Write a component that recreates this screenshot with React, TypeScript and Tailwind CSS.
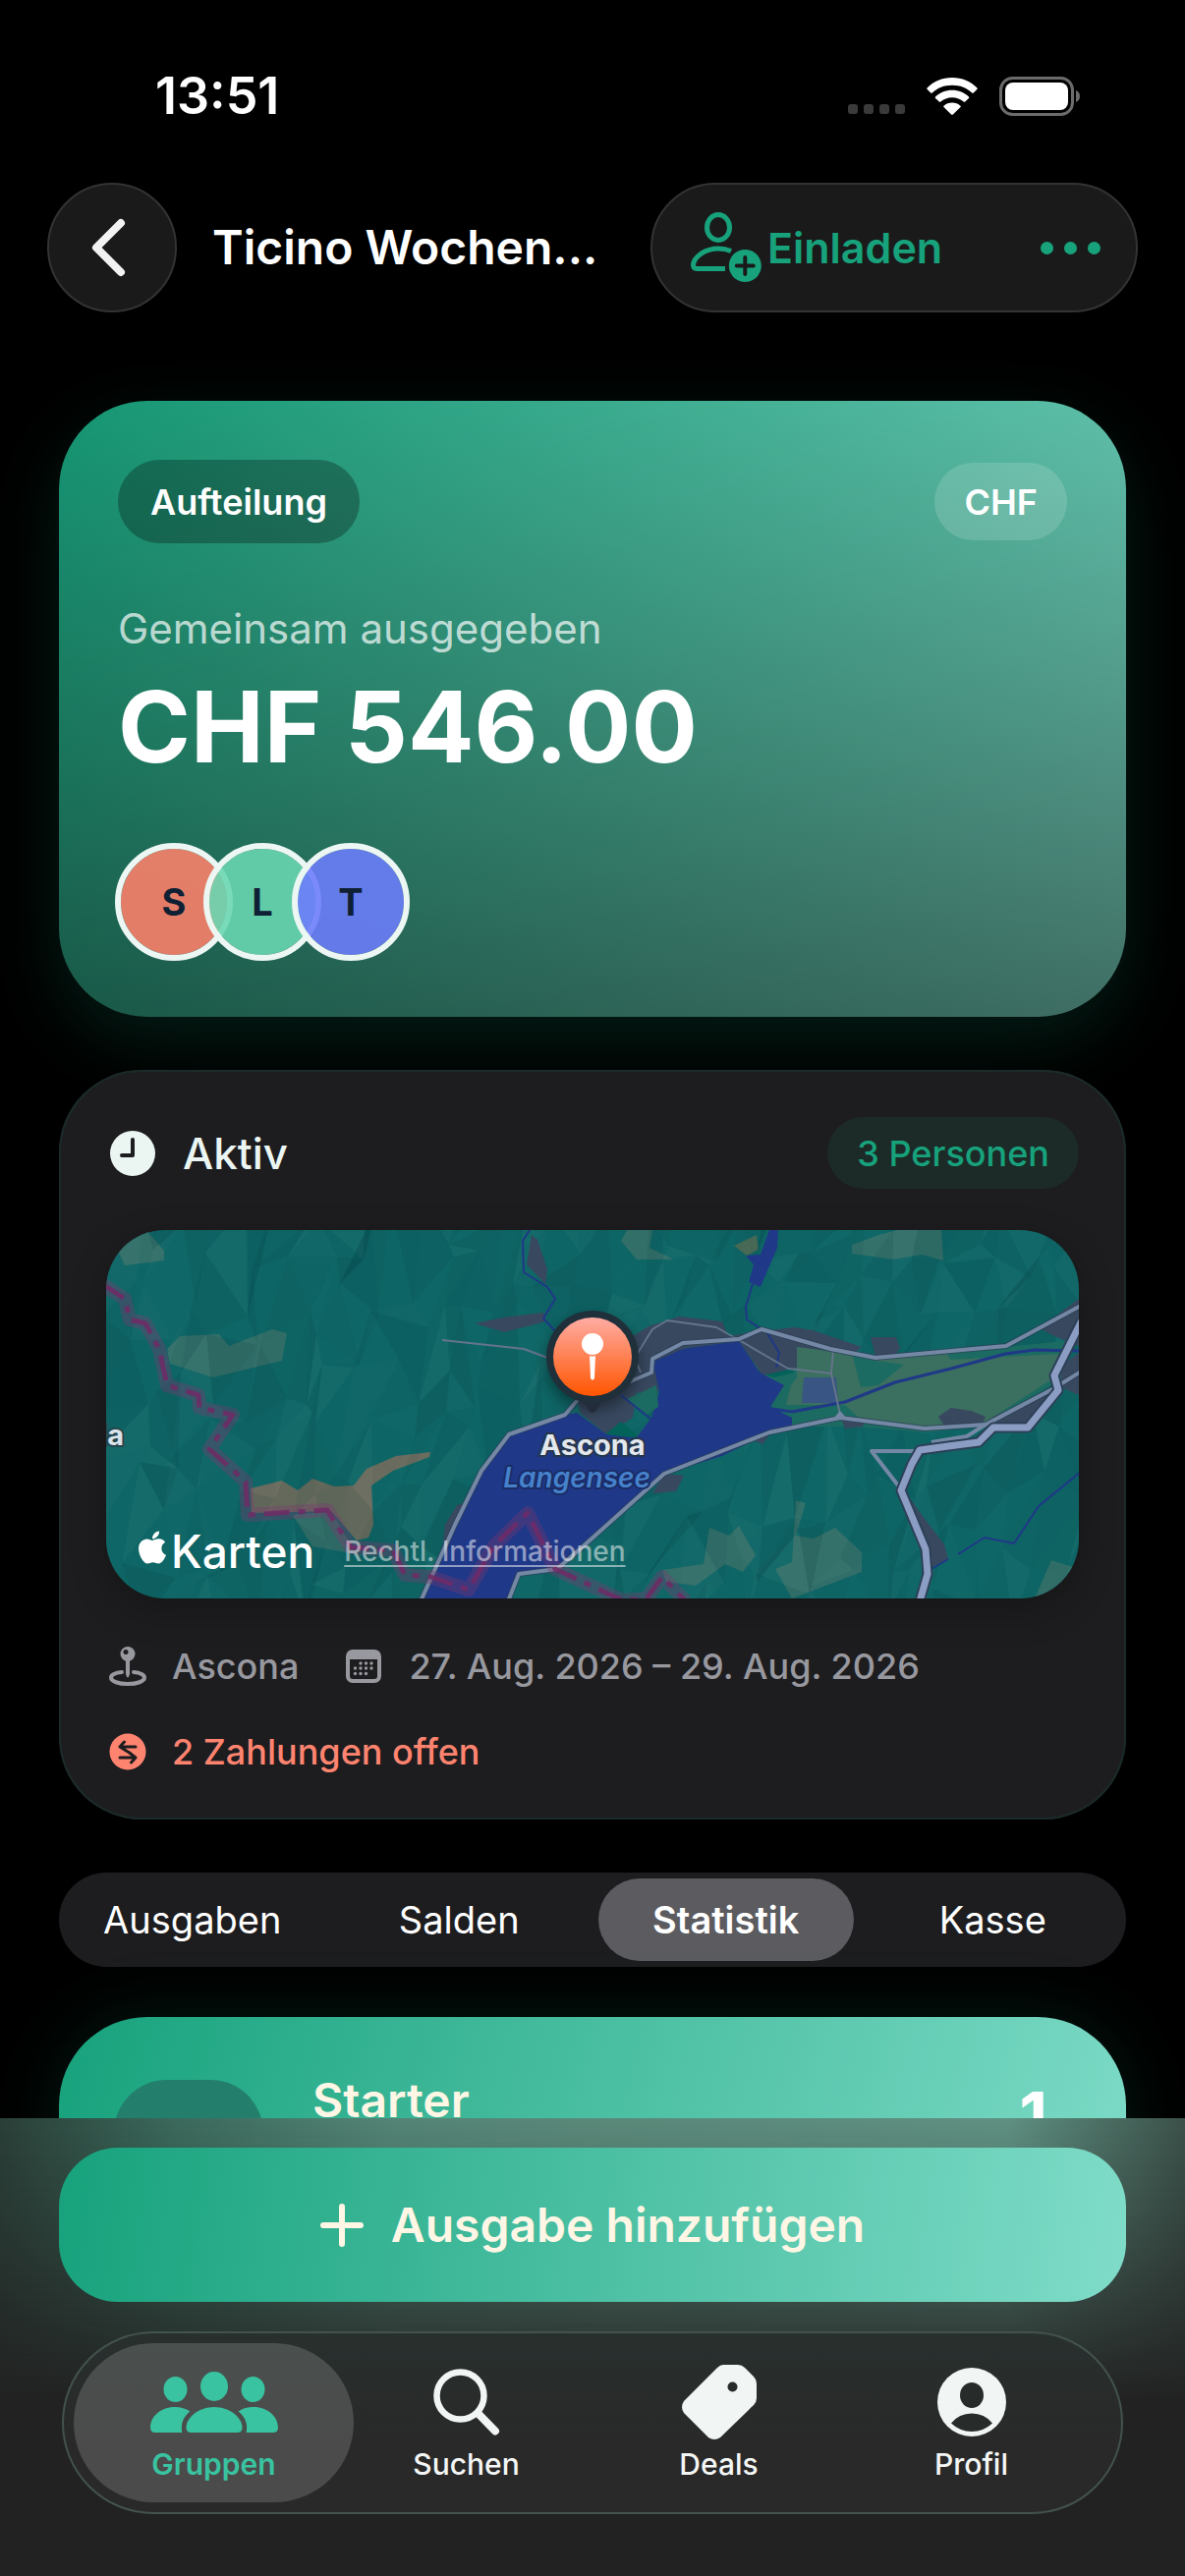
import type { ReactNode } from "react";
import { FaApple } from "react-icons/fa";

const MEMBERS = [
  { initial: "S", fill: "bg-[#fc806b]/89" },
  { initial: "L", fill: "bg-[#6ad7b2]/89" },
  { initial: "T", fill: "bg-[#6c7dfc]/89" },
];

const SEGMENTS = ["Ausgaben", "Salden", "Statistik", "Kasse"];

// Small seeded generator so the terrain looks the same on every render.
function seeded(seed: number) {
  let s = seed;
  return () => {
    s = (s * 16807) % 2147483647;
    return s / 2147483647;
  };
}

function buildTerrain() {
  const rand = seeded(4711);
  const cols = 38;
  const rows = 9;
  const pts: [number, number][][] = [];
  for (let r = 0; r <= rows; r++) {
    pts.push([]);
    for (let c = 0; c <= cols; c++) {
      pts[r].push([
        Math.round((c - 1) * 28 + (rand() - 0.5) * 40),
        Math.round((r - 1) * 54 + (rand() - 0.5) * 70),
      ]);
    }
  }
  const facets: { points: string; light: boolean; alpha: number }[] = [];
  for (let r = 0; r < rows; r++) {
    for (let c = 0; c < cols; c++) {
      const a = pts[r][c];
      const b = pts[r][c + 1];
      const d = pts[r + 1][c];
      const e = pts[r + 1][c + 1];
      for (const tri of [
        [a, b, d],
        [b, e, d],
      ]) {
        const v = rand();
        facets.push({
          points: tri.map((p) => p.join(",")).join(" "),
          light: v > 0.65,
          alpha: v > 0.65 ? (v - 0.65) * 0.08 : (0.65 - v) * 0.18,
        });
      }
    }
  }
  return facets;
}

const TERRAIN = buildTerrain();

const BORDER =
  "M-4 55 L19 70 L24 91 L40 95 L54 121 L62 158 L94 168 L95 181 L129 188 L105 223 L142 256 L144 290 L225 285 L249 323 L292 326 L304 351 L330 353 L369 366 L395 321 L429 288 L457 345 L502 366 L526 377 L550 375 L566 353 L590 378";
const NORTH_ROAD =
  "M520 160 L536 153 L555 145 L556 131 L587 115 L644 111 L667 101 L737 121 L783 130 L916 118 L992 77";
const SOUTH_ROAD =
  "M409 378 L420 350 L459 345 L482 325 L568 248 L675 206 L747 191 L833 202 L895 198 L965 161 L992 144";
const WEST_ROAD = "M320 378 L355 300 L382 245 L410 208 L467 188 L484 168";
const MOTORWAY =
  "M993 92 L965 148 L969 163 L938 201 L903 201 L888 216 L857 220 L828 224 L820 238 L809 265 L834 325 L836 350 L828 378";

function MapDrawing() {
  return (
    <svg
      viewBox="0 0 990 375"
      preserveAspectRatio="xMidYMid slice"
      className="h-full w-full"
      aria-hidden="true"
    >
      <defs>
        <linearGradient id="pin" x1="0" y1="0" x2="0" y2="1">
          <stop offset="0" stopColor="#ffaca4" />
          <stop offset="1" stopColor="#ff5500" />
        </linearGradient>
        <filter id="soft" x="-50%" y="-50%" width="200%" height="200%">
          <feGaussianBlur stdDeviation="8" />
        </filter>
      </defs>
      <rect width="990" height="375" fill="#0f6666" />

      {/* open ground */}
      <g fill="#33706a">
        <path d="M12 21 L26 6 L42 1 L59 21 L59 31 L19 36Z" />
        <path d="M62 121 L75 108 L115 106 L125 118 L169 101 L184 105 L179 133 L109 150 L65 136Z" />
        <path d="M524 11 L530 0 L556 0 L553 18 L578 30 L540 30Z" />
        <path d="M759 15 L786 5 L806 0 L850 0 L852 31 L830 25 L801 30 L759 24Z" />
        <path d="M614 303 L634 311 L644 301 L661 331 L648 348 L630 340 L600 362 L570 358 L566 346 L608 340Z" />
        <path d="M702 275 L712 278 L702 311 L720 314 L742 303 L769 328 L769 348 L698 375 L681 345 L698 338Z" />
        <path d="M945 375 L962 336 L990 345 V375Z M190 290 L229 286 L255 330 L210 322Z" />
      </g>
      <path
        d="M147 263 L179 255 L195 265 L210 253 L232 261 L252 260 L265 243 L295 230 L330 226 L329 231 L292 245 L270 260 L272 300 L267 313 L255 316 L229 286 L148 288Z"
        fill="#696c5e"
      />
      <path d="M639 16 L662 5 L664 20 L652 26Z" fill="#4c6d57" />

      {TERRAIN.map((f) => (
        <polygon
          key={f.points}
          points={f.points}
          fill={f.light ? "#ffffff" : "#002a33"}
          fillOpacity={f.alpha}
        />
      ))}

      {/* valley floor */}
      <path
        d="M660 112 L703 118 L783 131 L854 125 L985 112 L975 150 L894 200 L834 206 L760 200 L690 200 L660 150Z"
        fill="#1c6b62"
      />
      <path
        d="M703 118 L783 131 L854 124 L860 132 L969 126 L964 151 L894 196 L834 200 L766 191 L752 178 L692 178 L697 158 L703 150Z"
        fill="#3b6f5f"
      />
      <path d="M758 121 L783 133 L812 137 L786 158 L768 160Z" fill="#1c6b62" />
      <path d="M660 120 L690 118 L700 145 L680 150 L664 145Z" fill="#03625a" />

      {/* built-up areas */}
      <g fill="#38485f">
        <path d="M520 118 L552 98 L583 88 L627 93 L633 108 L660 104 L700 99 L719 102 L769 119 L760 126 L703 119 L703 140 L668 148 L644 113 L587 121 L555 138 L565 150 L560 170 L540 165 L536 191 L509 208 L482 186 L478 150Z" />
        <path d="M375 95 L405 89 L445 84 L448 93 L405 104Z" />
        <path d="M433 5 L439 10 L449 40 L447 55 L428 35Z" />
        <path d="M778 109 L804 109 L808 120 L800 131 L783 128Z" />
        <path d="M950 100 L990 70 L990 118 L965 108Z M972 138 L990 125 V168 L972 160Z" />
        <path d="M847 190 L860 181 L880 184 L895 190 L890 200 L855 202Z M903 190 L965 163 L938 199 L900 200Z" />
        <path d="M568 248 L588 250 L580 266 L556 268Z M357 280 L374 275 L366 300 L340 345 L345 300Z" />
        <path d="M816 270 L830 290 L853 320 L857 335 L840 343 L834 325Z" />
        <path d="M648 210 L680 202 L668 218Z M748 192 L772 194 L770 200 L752 202Z" />
      </g>
      <path d="M710 150 H743 L745 176 H708Z" fill="#385583" />

      {/* water */}
      <g fill="#1f3888">
        <path d="M322 375 L355 300 L382 245 L410 208 L467 188 L479 186 L509 208 L540 211 L555 191 L563 165 L558 141 L555 135 L587 121 L644 113 L665 145 L690 158 L676 180 L698 191 L698 200 L675 206 L627 230 L568 248 L482 325 L459 345 L420 350 L410 375Z" />
        <path d="M675 0 H684 L683 18 L666 58 L654 53 L659 35 L651 26 L666 25Z" />
      </g>
      <path d="M508 208 L524 195 L538 206 L540 212Z" fill="#03625a" />
      <path d="M530 172 L560 158 L562 180 L550 188Z" fill="#1c6b62" />
      <g fill="none" stroke="#1f3888" strokeLinejoin="round">
        <path d="M671 181 L698 185 L725 180 L752 175 L803 155 L860 141 L915 126 L945 122 L992 123" strokeWidth="3" />
        <path d="M658 55 L651 78 L652 91 L673 105 L685 125 L682 140" strokeWidth="2" />
        <path d="M431 0 L424 11 L425 43 L449 58 L457 70 L445 90 L460 106" strokeWidth="2" />
        <path d="M992 246 L949 281 L924 319 L894 313 L867 330 M857 335 L840 345" strokeWidth="2" />
        <path d="M524 168 L554 192" strokeWidth="2" />
      </g>

      {/* minor roads */}
      <g fill="none" stroke="#64748c" strokeWidth="2" strokeLinejoin="round">
        <path d="M342 112 L425 121 L460 134" />
        <path d="M544 145 L538 130 L556 101 L571 92 L621 99 L644 112 L694 141 L738 146 L747 188 M738 146 L740 122" />
      </g>

      {/* main roads */}
      <g fill="none" stroke="#2d4058" strokeWidth="6" strokeLinejoin="round" opacity="0.7">
        <path d={NORTH_ROAD} />
        <path d={SOUTH_ROAD} />
        <path d={WEST_ROAD} />
      </g>
      <g fill="none" stroke="#7488a5" strokeWidth="4" strokeLinejoin="round">
        <path d={NORTH_ROAD} />
        <path d={SOUTH_ROAD} />
        <path d={WEST_ROAD} />
        <path d="M822 225 L779 225 L806 260 M840 216 L876 210 L895 198" />
      </g>
      <path d="M740 192 L747 184 L754 192Z" fill="#7488a5" />
      <path d={MOTORWAY} fill="none" stroke="#2d4058" strokeWidth="11" strokeLinejoin="round" />
      <path d={MOTORWAY} fill="none" stroke="#8c9dc4" strokeWidth="7" strokeLinejoin="round" />

      {/* national border */}
      <g fill="none" strokeLinejoin="round">
        <path d={BORDER} stroke="#7d3a70" strokeOpacity="0.36" strokeWidth="14" />
        <path d={BORDER} stroke="#702a66" strokeOpacity="0.85" strokeWidth="5" strokeDasharray="26 9 7 9" />
      </g>

      {/* pin */}
      <circle cx="495" cy="136" r="46" fill="#000000" fillOpacity="0.45" filter="url(#soft)" />
      <path d="M478 168 H512 L503 176 Q499 186 495 186 Q491 186 487 176Z" fill="#232c3b" />
      <circle cx="495" cy="129" r="47" fill="#20303b" />
      <circle cx="495" cy="129" r="40" fill="url(#pin)" />
      <circle cx="495" cy="116" r="11" fill="#ffffff" />
      <path d="M492 128 Q495 129 498 128 L497 151 Q495 154 493 151Z" fill="#ffffff" />

      <g fontFamily="Inter, sans-serif" paintOrder="stroke" strokeLinejoin="round">
        <text x="495" y="229" textAnchor="middle" fontSize="29" fontWeight="700" fill="#e3e8ee" stroke="#26364d" strokeWidth="4">
          Ascona
        </text>
        <text x="479" y="262" textAnchor="middle" fontSize="28" fontWeight="600" fontStyle="italic" fill="#4682cc" stroke="#1b2d66" strokeWidth="4">
          Langensee
        </text>
        <text x="18" y="219" textAnchor="end" fontSize="29" fontWeight="700" fill="#dbe3ea" stroke="#26464d" strokeWidth="4">
          ia
        </text>
      </g>
    </svg>
  );
}

function WifiIcon() {
  return (
    <svg viewBox="0 0 52 38" className="h-[38px] w-[52px]" fill="#ffffff" aria-hidden="true">
      <path d="M26 0 C36 0 45 4 51.500 10.500 Q52 11.200 51.500 11.800 L47.800 15.500 Q47 16.200 46.200 15.500 C41 10.500 34 7.800 26 7.800 C18 7.800 11 10.500 5.800 15.500 Q5 16.200 4.200 15.500 L0.500 11.800 Q0 11.200 0.500 10.500 C7 4 16 0 26 0Z" />
      <path d="M26 12.800 C32.600 12.800 38.600 15.300 43 19.500 Q43.700 20.200 43 20.900 L39.200 24.600 Q38.500 25.200 37.700 24.600 C34.600 21.900 30.500 20.200 26 20.200 C21.500 20.200 17.400 21.900 14.300 24.600 Q13.500 25.200 12.800 24.600 L9 20.900 Q8.300 20.200 9 19.500 C13.400 15.300 19.400 12.800 26 12.800Z" />
      <path d="M26 25.500 C29.200 25.500 32.200 26.700 34.400 28.700 Q35.200 29.400 34.500 30.100 L26.900 37.500 Q26 38.200 25.100 37.500 L17.500 30.100 Q16.800 29.400 17.600 28.700 C19.800 26.700 22.800 25.500 26 25.500Z" />
    </svg>
  );
}

function BatteryIcon() {
  return (
    <svg viewBox="0 0 83 40" className="h-[40px] w-[83px]" aria-hidden="true">
      <rect x="1.500" y="1.500" width="73" height="37" rx="12" fill="none" stroke="#6b6b6b" strokeWidth="3" />
      <rect x="6" y="6" width="64" height="28" rx="8" fill="#ffffff" />
      <path d="M78 14 Q82 15.500 82 20 Q82 24.500 78 26Z" fill="#6b6b6b" />
    </svg>
  );
}

function PersonPlusIcon() {
  return (
    <svg viewBox="0 0 72 72" className="h-[72px] w-[72px]" fill="none" aria-hidden="true">
      <ellipse cx="28" cy="15.500" rx="11.500" ry="13" stroke="#17a27c" strokeWidth="5" />
      <path
        d="M35 57.500 H6 Q2.500 57.500 2.500 53.500 C3 46 14 37 28 37 C33 37 37 37.800 41 39.500"
        stroke="#17a27c"
        strokeWidth="5"
        strokeLinecap="butt"
      />
      <circle cx="55.300" cy="54.500" r="16.500" fill="#17a27c" />
      <path d="M55.300 46 V63 M46.800 54.500 H63.800" stroke="#1a1a1a" strokeWidth="4" strokeLinecap="round" />
    </svg>
  );
}

function ClockIcon() {
  return (
    <svg viewBox="0 0 46 46" className="size-[46px]" aria-hidden="true">
      <circle cx="23" cy="23" r="23" fill="#ebf6f3" />
      <path d="M23 9 V25 H12" fill="none" stroke="#1d1d1f" strokeWidth="4" strokeLinecap="round" strokeLinejoin="round" />
    </svg>
  );
}

function MapPinIcon() {
  return (
    <svg viewBox="0 0 38 40" className="h-[40px] w-[38px]" fill="none" aria-hidden="true">
      <path d="M13 26 C6 26.500 2 29 2 31.500 C2 35.500 9.500 38 19 38 C28.500 38 36 35.500 36 31.500 C36 29 32 26.500 25 26" stroke="#98989f" strokeWidth="4" strokeLinecap="round" />
      <circle cx="19" cy="7.500" r="7.500" fill="#98989f" />
      <circle cx="17" cy="5.500" r="2.500" fill="#1d1d1f" />
      <path d="M17 14 H21 V28 Q19 35 17 28Z" fill="#98989f" />
    </svg>
  );
}

function CalendarIcon() {
  const dots = [
    [15, 14], [20.5, 14], [26, 14],
    [9.500, 19], [15, 19], [20.5, 19], [26, 19],
    [9.500, 24.500], [15, 24.500], [20.5, 24.500],
  ];
  return (
    <svg viewBox="0 0 36 34" className="h-[34px] w-[36px]" aria-hidden="true">
      <rect x="2" y="2" width="32" height="30" rx="5" fill="none" stroke="#98989f" strokeWidth="4" />
      <path d="M1 10 V6 Q1 1 6 1 H30 Q35 1 35 6 V10Z" fill="#98989f" />
      {dots.map(([x, y]) => (
        <circle key={`${x}-${y}`} cx={x} cy={y} r="1.700" fill="#98989f" />
      ))}
    </svg>
  );
}

function SwapIcon() {
  return (
    <svg viewBox="0 0 38 38" className="size-[38px]" aria-hidden="true">
      <circle cx="19" cy="19" r="18.500" fill="#ff8470" />
      <path
        d="M27 14 H11 M15.500 9 L11 14 L19 19 M11 25 H27 M22.500 30 L27 25 L20 19.500"
        fill="none"
        stroke="#1d1d1f"
        strokeWidth="3"
        strokeLinecap="round"
        strokeLinejoin="round"
      />
    </svg>
  );
}

function GroupIcon() {
  return (
    <svg viewBox="0 0 130 62" className="h-[62px] w-[130px]" fill="#39c3a0" aria-hidden="true">
      <ellipse cx="25.500" cy="18" rx="12" ry="13" />
      <ellipse cx="104.500" cy="18" rx="12" ry="13" />
      <ellipse cx="65" cy="15" rx="14" ry="15" />
      <path d="M40.500 40.500 C33.500 46 30.500 54 32.500 62 H5 Q0 62 0 57 C0 46 10 36 25 36 C31 36 36 37.500 40.500 40.500Z" />
      <path d="M89.500 40.500 C96.500 46 99.500 54 97.500 62 H125 Q130 62 130 57 C130 46 120 36 105 36 C99 36 94 37.500 89.500 40.500Z" />
      <path d="M65 36 C81 36 93.500 47 93.500 57 Q93.500 62 88.500 62 H41.500 Q36.500 62 36.500 57 C36.500 47 49 36 65 36Z" stroke="#494d4c" strokeWidth="9" paintOrder="stroke" clipPath="inset(0 -10px)" />
    </svg>
  );
}

function SearchIcon() {
  return (
    <svg viewBox="0 0 68 68" className="size-[68px]" fill="none" stroke="#f1f6f5" aria-hidden="true">
      <circle cx="27.500" cy="27.500" r="24" strokeWidth="6.500" />
      <path d="M46 46 L63 63.500" strokeWidth="8" strokeLinecap="round" />
    </svg>
  );
}

function TagIcon() {
  return (
    <svg viewBox="0 0 78 78" className="size-[78px]" aria-hidden="true">
      <path
        fill="#f1f6f5"
        d="M43 1 H58 Q62 1 65 4 L74 13 Q77 16 77 20 V35 Q77 39 74 42 L40 75 Q34 79 28 75 L3 50 Q-1 44 3 38 L37 4 Q40 1 43 1Z"
      />
      <circle cx="52.500" cy="23.500" r="5" fill="#272c2b" />
    </svg>
  );
}

function ProfileIcon() {
  return (
    <svg viewBox="0 0 70 70" className="size-[70px]" aria-hidden="true">
      <circle cx="35" cy="35" r="35" fill="#f1f6f5" />
      <ellipse cx="35" cy="28" rx="12" ry="13" fill="#272b2a" />
      <path d="M14 56.500 Q22 46.500 35 46.500 Q48 46.500 56 56.500 Q47 65 35 65 Q23 65 14 56.500Z" fill="#272b2a" />
    </svg>
  );
}

function Tab({ label, active = false, children }: { label: string; active?: boolean; children: ReactNode }) {
  return (
    <button
      type="button"
      aria-current={active ? "page" : undefined}
      className={`-mx-[14px] flex h-[162px] flex-col items-center rounded-full pt-5 text-[30px] leading-9 ${
        active ? "bg-white/16 font-semibold text-[#39c3a0]" : "font-medium text-[#f4f6f5]"
      }`}
    >
      <span className="flex h-20 items-center justify-center">{children}</span>
      <span className="mt-[5px]">{label}</span>
    </button>
  );
}

export default function App() {
  return (
    <div className="flex h-screen flex-col overflow-hidden bg-black font-['Inter',sans-serif] text-white">
      <div className="flex min-h-0 flex-1 flex-col overflow-hidden">
        <div className="flex h-[126px] shrink-0 items-center justify-between pl-[158px] pr-[106px] pt-[70px]">
          <span className="text-[52px] font-semibold leading-none">13:51</span>
          <div className="flex items-center">
            <div className="mt-[26px] flex gap-1.5">
              <span className="size-[10px] rounded-[3px] bg-[#3a3a3a]" />
              <span className="size-[10px] rounded-[3px] bg-[#3a3a3a]" />
              <span className="size-[10px] rounded-[3px] bg-[#3a3a3a]" />
              <span className="size-[10px] rounded-[3px] bg-[#3a3a3a]" />
            </div>
            <div className="ml-[22px]">
              <WifiIcon />
            </div>
            <div className="ml-[22px]">
              <BatteryIcon />
            </div>
          </div>
        </div>

        <header className="mt-[60px] flex shrink-0 items-center px-12">
          <button
            type="button"
            aria-label="Zurück"
            className="flex size-[132px] shrink-0 items-center justify-center rounded-full border-2 border-[#333333] bg-[#1a1a1a]"
          >
            <svg viewBox="0 0 36 60" className="mr-2 h-[60px] w-[36px]" aria-hidden="true">
              <path d="M31 5 L6 30 L31 55" fill="none" stroke="#f2f2f2" strokeWidth="8" strokeLinecap="round" strokeLinejoin="round" />
            </svg>
          </button>
          <h1 className="ml-9 flex-1 whitespace-nowrap text-[48px] font-semibold leading-[60px]">Ticino Wochen...</h1>
          <div className="flex h-[132px] w-[496px] items-center justify-between rounded-full border-2 border-[#333333] bg-[#1a1a1a] pl-[39px] pr-9">
            <button type="button" className="flex items-center gap-1.5 text-[43px] font-semibold text-[#17a27c]">
              <PersonPlusIcon />
              Einladen
            </button>
            <button type="button" aria-label="Mehr" className="flex items-center gap-[11px]">
              <span className="size-[13px] rounded-full bg-[#17a27c]" />
              <span className="size-[13px] rounded-full bg-[#17a27c]" />
              <span className="size-[13px] rounded-full bg-[#17a27c]" />
            </button>
          </div>
        </header>

        <main className="mt-[90px] flex flex-col gap-[54px] px-[60px]">
          <section className="rounded-[90px] bg-[linear-gradient(180deg,rgba(0,0,0,0.07),rgba(0,0,0,0.5)),linear-gradient(120deg,#17a27c,#7fdcc8)] px-[60px] pb-[57px] pt-[60px] shadow-[0_24px_72px_rgba(23,162,124,0.18)]">
            <div className="flex items-center justify-between text-[36px] font-semibold leading-none">
              <span className="flex h-[85px] items-center rounded-full bg-black/28 px-[33px]">Aufteilung</span>
              <span className="flex h-[79px] items-center rounded-full bg-white/14 px-[30px]">CHF</span>
            </div>
            <p className="mt-[60px] text-[42px] leading-[54px] text-white/70">Gemeinsam ausgegeben</p>
            <p className="mt-[13px] text-[100px] font-bold leading-[120px]">CHF 546.00</p>
            <div className="-ml-[3px] mt-[58px] flex">
              {MEMBERS.map((m) => (
                <span
                  key={m.initial}
                  className={`mr-[-30px] flex size-[120px] items-center justify-center rounded-full border-[6px] border-[#ecf6f3] bg-clip-padding text-[38px] font-bold text-[#0f2034] ${m.fill}`}
                >
                  {m.initial}
                </span>
              ))}
            </div>
          </section>

          <section className="rounded-[84px] bg-[#1d1d1f] px-12 pb-[50px] pt-12 shadow-[inset_0_0_0_2px_#1b2b29]">
            <div className="flex items-center">
              <div className="ml-1">
                <ClockIcon />
              </div>
              <h2 className="ml-7 flex-1 text-[44px] font-medium leading-none text-[#ebf6f3]">Aktiv</h2>
              <span className="flex h-[73px] items-center rounded-full bg-[#1c2a28] px-[30px] text-[36px] font-medium text-[#17a27c]">
                3 Personen
              </span>
            </div>

            <div className="relative mt-[42px] h-[375px] overflow-hidden rounded-[60px] shadow-[0_12px_36px_rgba(0,0,0,0.25)]">
              <MapDrawing />
              <div className="absolute bottom-4 left-7 flex items-center">
                <FaApple className="-mt-2 size-[38px]" />
                <span className="text-[46px] leading-[64px] font-medium">Karten</span>
                <a href="#legal" className="ml-[30px] text-[28px] font-medium leading-8 text-white/50 underline underline-offset-4">
                  Rechtl. Informationen
                </a>
              </div>
            </div>

            <div className="mt-[49px] flex h-10 items-center text-[36px] font-medium text-[#98989f]">
              <div className="ml-[3px] flex items-center gap-[26px]">
                <MapPinIcon />
                <span>Ascona</span>
              </div>
              <div className="ml-12 flex items-center gap-7">
                <CalendarIcon />
                <span>27. Aug. 2026 – 29. Aug. 2026</span>
              </div>
            </div>
            <div className="ml-[3px] mt-12 flex h-[38px] items-center gap-[26px] text-[36px] font-medium text-[#ff8470]">
              <SwapIcon />
              <span>2 Zahlungen offen</span>
            </div>
          </section>

          <div role="tablist" className="grid h-24 grid-cols-4 gap-3 rounded-full bg-[#1d1d1f] p-1.5 text-[38px]">
            {SEGMENTS.map((s) => (
              <button
                key={s}
                type="button"
                role="tab"
                aria-selected={s === "Statistik"}
                className={`rounded-full ${s === "Statistik" ? "bg-[#5b5b60] font-semibold" : "font-normal"}`}
              >
                {s}
              </button>
            ))}
          </div>

          <section className="-mt-[3px] flex h-[300px] shrink-0 items-start rounded-[90px] bg-[linear-gradient(105deg,#17a27c,#7fdcc8)] px-14 pt-16 shadow-[0_0_72px_rgba(23,162,124,0.16)]">
            <div className="size-[152px] rounded-[54px] bg-[#237f6c]" />
            <h2 className="ml-[50px] flex-1 text-[48px] font-semibold leading-[42px] text-[#fff6e5]">Starter</h2>
            <span className="mr-6 mt-2 text-[66px] font-bold leading-[56px]">1</span>
          </section>
        </main>
      </div>

      <footer className="relative shrink-0 bg-[#222222] px-[60px] pb-[63px] pt-[30px]">
        <div className="absolute inset-0 bg-[linear-gradient(90deg,#2a3f38_0%,#3b6a5c_15%,#538576_33%,#5a897a_50%,#5f9182_85%,#3b514a_100%)] [mask-image:linear-gradient(180deg,#000_0%,rgba(0,0,0,0.75)_20%,rgba(0,0,0,0.32)_44%,transparent_62%)]" />
        <button
          type="button"
          className="relative flex h-[157px] w-full items-center justify-center gap-7 rounded-[60px] bg-[linear-gradient(98deg,#17a27c,#7fdcc8)] text-[48px] font-semibold text-[#fff6e5]"
        >
          <svg viewBox="0 0 44 44" className="size-11" aria-hidden="true">
            <path d="M22 3 V41 M3 22 H41" stroke="#fff6e5" strokeWidth="6" strokeLinecap="round" />
          </svg>
          Ausgabe hinzufügen
        </button>

        <nav className="relative mx-[3px] mt-[30px] grid h-[186px] grid-cols-4 items-center rounded-full border-2 border-[#43524e] bg-[linear-gradient(180deg,#28302e,#292929_60%)] px-6">
          <Tab label="Gruppen" active>
            <GroupIcon />
          </Tab>
          <Tab label="Suchen">
            <SearchIcon />
          </Tab>
          <Tab label="Deals">
            <TagIcon />
          </Tab>
          <Tab label="Profil">
            <ProfileIcon />
          </Tab>
        </nav>
      </footer>
    </div>
  );
}
